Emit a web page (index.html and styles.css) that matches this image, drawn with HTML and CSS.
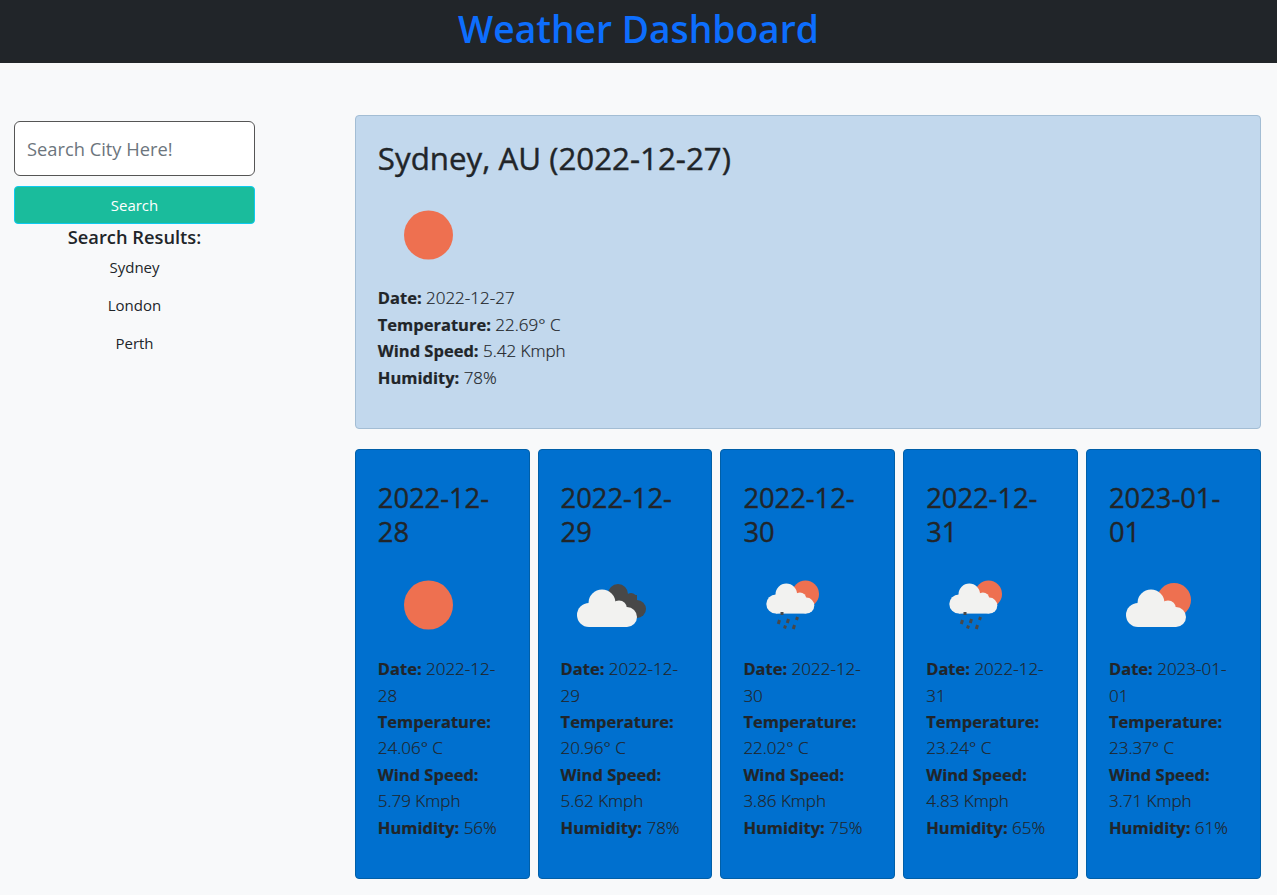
FILE: index.html
```html
<!DOCTYPE html>
<html lang="en">
<head>
  <meta charset="UTF-8">
  <meta name="viewport" content="width=device-width, initial-scale=1.0">
  <title>Weather Dashboard</title>
  <link rel="stylesheet" href="styles.css">
</head>
<body>
  <!-- shared icon parts -->
  <svg class="icon-defs" aria-hidden="true">
    <defs>
      <g id="cloud">
        <circle cx="28" cy="60" r="12"/>
        <circle cx="41" cy="48" r="13.500"/>
        <circle cx="58" cy="53.500" r="8"/>
        <circle cx="66" cy="62" r="10"/>
        <rect x="28" y="52" width="38" height="20"/>
      </g>
      <g id="rain">
        <path d="M39 57v3M36.500 65l-1.200 4M45.500 64l-1.200 4M54.500 62l-1 3M42.500 70.500l-1 3M51.500 70l-1.200 4"/>
      </g>
      <symbol id="icon-clear" viewBox="0 0 100 100">
        <circle cx="50.500" cy="50" r="24.500" fill="#ee7050"/>
      </symbol>
      <symbol id="icon-overcast" viewBox="0 0 100 100">
        <g fill="#484848">
          <circle cx="57" cy="39" r="10"/>
          <circle cx="70" cy="44" r="6"/>
          <circle cx="76" cy="54" r="9"/>
          <rect x="50" y="40" width="26" height="23"/>
        </g>
        <use href="#cloud" fill="#f2f2f0"/>
      </symbol>
      <symbol id="icon-rain" viewBox="0 0 100 100">
        <circle cx="62.500" cy="39" r="13.500" fill="#ee7050"/>
        <use href="#cloud" fill="#f2f2f0" transform="translate(10.500 1) scale(.8)"/>
        <use href="#rain" fill="none" stroke="#484848" stroke-width="3"/>
      </symbol>
      <symbol id="icon-partly" viewBox="0 0 100 100">
        <circle cx="65" cy="45" r="17" fill="#ee7050"/>
        <use href="#cloud" fill="#f2f2f0" transform="translate(1 0)"/>
      </symbol>
    </defs>
  </svg>

  <header class="site-header">
    <h1>Weather Dashboard</h1>
  </header>

  <div class="page">
    <aside class="sidebar">
      <form class="search-form">
        <input type="text" class="search-input" placeholder="Search City Here!">
        <button type="button" class="search-btn">Search</button>
      </form>
      <h2 class="results-title">Search Results:</h2>
      <ul class="results">
        <li>Sydney</li>
        <li>London</li>
        <li>Perth</li>
      </ul>
    </aside>

    <main class="main">
      <section class="today">
        <h2 class="today-title">Sydney, AU (2022-12-27)</h2>
        <svg class="weather-icon"><use href="#icon-clear"/></svg>
        <p class="stats">
          <strong>Date:</strong> 2022-12-27<br>
          <strong>Temperature:</strong> 22.69° C<br>
          <strong>Wind Speed:</strong> 5.42 Kmph<br>
          <strong>Humidity:</strong> 78%
        </p>
      </section>

      <section class="forecast">
        <article class="day">
          <h3 class="day-title">2022-12-28</h3>
          <svg class="weather-icon"><use href="#icon-clear"/></svg>
          <p class="stats">
            <strong>Date:</strong> 2022-12-28<br>
            <strong>Temperature:</strong> 24.06° C<br>
            <strong>Wind Speed:</strong> 5.79 Kmph<br>
            <strong>Humidity:</strong> 56%
          </p>
        </article>
        <article class="day">
          <h3 class="day-title">2022-12-29</h3>
          <svg class="weather-icon"><use href="#icon-overcast"/></svg>
          <p class="stats">
            <strong>Date:</strong> 2022-12-29<br>
            <strong>Temperature:</strong> 20.96° C<br>
            <strong>Wind Speed:</strong> 5.62 Kmph<br>
            <strong>Humidity:</strong> 78%
          </p>
        </article>
        <article class="day">
          <h3 class="day-title">2022-12-30</h3>
          <svg class="weather-icon"><use href="#icon-rain"/></svg>
          <p class="stats">
            <strong>Date:</strong> 2022-12-30<br>
            <strong>Temperature:</strong> 22.02° C<br>
            <strong>Wind Speed:</strong> 3.86 Kmph<br>
            <strong>Humidity:</strong> 75%
          </p>
        </article>
        <article class="day">
          <h3 class="day-title">2022-12-31</h3>
          <svg class="weather-icon"><use href="#icon-rain"/></svg>
          <p class="stats">
            <strong>Date:</strong> 2022-12-31<br>
            <strong>Temperature:</strong> 23.24° C<br>
            <strong>Wind Speed:</strong> 4.83 Kmph<br>
            <strong>Humidity:</strong> 65%
          </p>
        </article>
        <article class="day">
          <h3 class="day-title">2023-01-01</h3>
          <svg class="weather-icon"><use href="#icon-partly"/></svg>
          <p class="stats">
            <strong>Date:</strong> 2023-01-01<br>
            <strong>Temperature:</strong> 23.37° C<br>
            <strong>Wind Speed:</strong> 3.71 Kmph<br>
            <strong>Humidity:</strong> 61%
          </p>
        </article>
      </section>
    </main>
  </div>
</body>
</html>
```

FILE: styles.css
```css
body {
  font-family: 'Open Sans', 'Noto Sans', sans-serif;
  background-color: #f8f9fa;
  color: #212529;
  margin: 0;
  padding: 0;
}

.icon-defs {
  display: none;
}

.site-header {
  background-color: #212529;
  height: 63px;
  padding-bottom: 4px;
  box-sizing: border-box;
  display: flex;
  align-items: center;
  justify-content: center;
}

.site-header h1 {
  margin: 0;
  color: #0d6efd;
  font-size: 37.200px;
  font-weight: 600;
  line-height: 1.2;
}

.page {
  display: grid;
  grid-template-columns: 241px 906px;
  column-gap: 99.800px;
  padding: 52px 16px 16px 14px;
}

.sidebar {
  padding-top: 6px;
  text-align: center;
}

.search-form {
  display: flex;
  flex-direction: column;
  gap: 10px;
}

.search-input {
  height: 55px;
  padding: 0 12px;
  border: 1px solid #555;
  border-radius: 6px;
  background-color: #fff;
  font-family: inherit;
  font-size: 18.300px;
  box-sizing: border-box;
}

.search-input::placeholder {
  color: #6c757d;
}

.search-btn {
  height: 38px;
  border: 1px solid #0dcaf0;
  border-radius: 4px;
  background-color: #1abc9c;
  color: #fff;
  font-family: inherit;
  font-size: 15px;
}

.results-title {
  margin: 0;
  font-size: 18.300px;
  font-weight: 600;
  line-height: 26px;
}

.results {
  list-style: none;
  margin: -2px 0 0;
  padding: 0;
  font-size: 15px;
}

.results li {
  height: 38px;
  line-height: 38px;
}

.main {
  display: flex;
  flex-direction: column;
  gap: 20px;
}

.today {
  background-color: #c2d8ed;
  border: 1px solid #a3bdd4;
  border-radius: 4px;
  padding: 23px 22px 21px;
}

.today-title {
  margin: 0 0 8px;
  font-size: 31.300px;
  font-weight: 500;
  line-height: 38.400px;
  -webkit-text-stroke: .4px #212529;
}

.weather-icon {
  display: block;
  width: 100px;
  height: 100px;
}

.stats {
  margin: 0 0 16px;
  font-size: 17px;
  font-weight: 300;
  line-height: 26.400px;
  -webkit-text-stroke: .2px #212529;
}

.stats strong {
  font-size: 16.500px;
  font-weight: 700;
}

.forecast {
  display: grid;
  grid-template-columns: repeat(5, 1fr);
  gap: 8px;
}

.day {
  background-color: #0070cf;
  border: 1px solid #005fa8;
  border-radius: 4px;
  padding: 31px 22px 21px;
}

.day-title {
  margin: 0 0 7px;
  font-size: 27.300px;
  font-weight: 500;
  line-height: 33.600px;
  -webkit-text-stroke: .4px #212529;
}

.day .weather-icon {
  margin-bottom: 1px;
}
```
